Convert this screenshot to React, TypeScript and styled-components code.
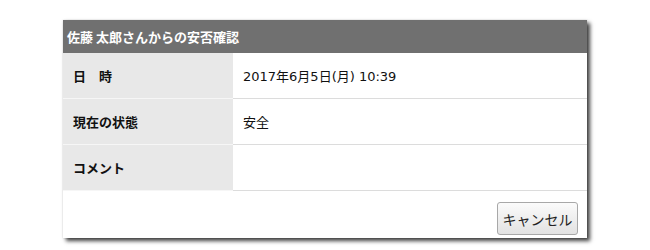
import React from "react";
import styled, { createGlobalStyle } from "styled-components";

const Global = createGlobalStyle`
  html, body { margin: 0; padding: 0; background: #fff; }
  body { font-family: "Noto Sans CJK JP", "Noto Sans", sans-serif; color: #111; min-height: 250px; }
`;

const Page = styled.div`
  padding: 20px 0 12px 63px;
`;

const Dialog = styled.div`
  width: 524px;
  background: #fff;
  box-shadow: 3px 3px 4px rgba(0, 0, 0, 0.75), 0 0 2px rgba(0, 0, 0, 0.15);
`;

const Header = styled.div`
  height: 33px;
  line-height: 33px;
  background: #707070;
  color: #fff;
  font-weight: bold;
  font-size: 13px;
  padding-left: 4px;
`;

const Row = styled.div`
  display: grid;
  grid-template-columns: 170px 1fr;
  height: 46px;
`;

const Label = styled.div`
  background: #e8e8e8;
  border-bottom: 1px solid #f6f6f6;
  font-weight: bold;
  font-size: 13px;
  padding-left: 10px;
  display: flex;
  align-items: center;
  white-space: pre;
`;

const Value = styled.div`
  border-bottom: 1px solid #dcdcdc;
  font-family: "DejaVu Sans", "Noto Sans CJK JP", sans-serif;
  font-size: 13px;
  padding-left: 10px;
  display: flex;
  align-items: center;
`;

const Footer = styled.div`
  box-sizing: border-box;
  height: 47px;
  display: flex;
  justify-content: flex-end;
  align-items: flex-start;
  padding: 11px 9px 0 0;
`;

const Button = styled.button`
  box-sizing: border-box;
  height: 33px;
  width: 81px;
  border: 1px solid #a8a8a8;
  border-radius: 3px;
  background: linear-gradient(#fbfbfb, #e2e2e2);
  font-family: "Noto Sans CJK JP", "Noto Sans", sans-serif;
  font-size: 14px;
  line-height: 1;
  color: #222;
  padding: 0;
`;

const rows: [string, string][] = [
  ["日　時", "2017年6月5日(月) 10:39"],
  ["現在の状態", "安全"],
  ["コメント", ""],
];

export default function App() {
  return (
    <>
      <Global />
      <Page>
        <Dialog>
          <Header>佐藤 太郎さんからの安否確認</Header>
          {rows.map(([l, v]) => (
            <Row key={l}>
              <Label>{l}</Label>
              <Value>{v}</Value>
            </Row>
          ))}
          <Footer>
            <Button>キャンセル</Button>
          </Footer>
        </Dialog>
      </Page>
    </>
  );
}
